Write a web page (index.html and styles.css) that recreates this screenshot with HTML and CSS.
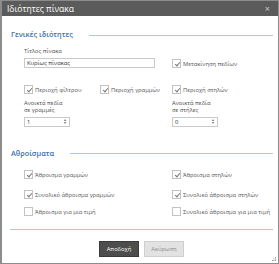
FILE: index.html
```html
<!DOCTYPE html>
<html lang="el">
<head>
  <meta charset="UTF-8">
  <meta name="viewport" content="width=device-width, initial-scale=1.0">
  <title>Ιδιότητες πίνακα</title>
  <link rel="stylesheet" href="styles.css">
</head>
<body>
  <div class="dialog">
    <div class="titlebar">
      <span>Ιδιότητες πίνακα</span>
      <span class="close">×</span>
    </div>
    <div class="content">
      <div class="section-head"><span>Γενικές ιδιότητες</span><i></i></div>
      <div class="general">
        <div class="field title-field">
          <label class="small">Τίτλος πίνακα</label>
          <div class="textbox">Κυρίως πίνακας</div>
        </div>
        <div class="check move-check"><span class="box on"></span>Μετακίνηση πεδίων</div>

        <div class="check row2"><span class="box on"></span>Περιοχή φίλτρου</div>
        <div class="check row2"><span class="box on"></span>Περιοχή γραμμών</div>
        <div class="check row2"><span class="box on"></span>Περιοχή στηλών</div>

        <div class="field row3">
          <label class="small">Ανοικτά πεδία<br>σε γραμμές</label>
          <div class="textbox num">1<span class="spin">▴<br>▾</span></div>
        </div>
        <div class="row3"></div>
        <div class="field row3">
          <label class="small">Ανοικτά πεδία<br>σε στήλες</label>
          <div class="textbox num">0<span class="spin">▴<br>▾</span></div>
        </div>
      </div>

      <div class="section-head sums-head"><span>Αθροίσματα</span><i></i></div>
      <div class="sums">
        <div class="check"><span class="box on"></span>Άθροισμα γραμμών</div>
        <div class="check"><span class="box on"></span>Άθροισμα στηλών</div>
        <div class="check"><span class="box on"></span>Συνολικό άθροισμα γραμμών</div>
        <div class="check"><span class="box on"></span>Συνολικό άθροισμα στηλών</div>
        <div class="check last"><span class="box"></span>Άθροισμα για μια τιμή</div>
        <div class="check last"><span class="box"></span>Συνολικό άθροισμα για μια τιμή</div>
      </div>

      <div class="footer">
        <button class="btn primary">Αποδοχή</button>
        <button class="btn">Ακύρωση</button>
      </div>
    </div>
    <svg class="grip" width="5" height="5" viewBox="0 0 5 5">
      <rect x="3" y="0" width="1" height="1" fill="#999"/>
      <rect x="1.5" y="1.5" width="1" height="1" fill="#999"/>
      <rect x="3" y="1.5" width="1" height="1" fill="#999"/>
      <rect x="0" y="3" width="1" height="1" fill="#999"/>
      <rect x="1.5" y="3" width="1" height="1" fill="#999"/>
      <rect x="3" y="3" width="1" height="1" fill="#999"/>
    </svg>
  </div>
</body>
</html>
```

FILE: styles.css
```css
body { margin: 0; font-family: "Open Sans", "Noto Sans", sans-serif; background: #fff; }
.dialog {
  position: relative;
  width: 279px;
  height: 264px;
  box-sizing: border-box;
  border: 1px solid #8c8c8c;
  border-left-width: 2px;
  background: #fff;
  color: #4a4a4a;
}
.titlebar {
  height: 15px;
  background: #5b5b5b;
  color: #fff;
  font-size: 8.5px;
  display: flex;
  align-items: center;
  justify-content: space-between;
  padding: 0 8px 0 5px;
}
.close { color: #c8c8c8; font-size: 9px; }
.content { padding: 13px 5px 0 9px; }

.section-head {
  display: flex;
  align-items: center;
  height: 10px;
  color: #3a6fb0;
  font-size: 7.3px;
  font-weight: 600;
  white-space: nowrap;
}
.section-head i {
  flex: 1;
  height: 0;
  border-top: 1px solid #a9c8ee;
  margin: 2px 0 0 16px;
}
.sums-head { margin-top: 21px; }

.small { display: block; font-size: 5.8px; line-height: 7.5px; color: #4a4a4a; white-space: nowrap; }
.check {
  display: flex;
  align-items: center;
  font-size: 5.8px;
  height: 8px;
  gap: 2px;
  color: #555;
  white-space: nowrap;
}
.box {
  width: 7px;
  height: 7px;
  border: 1px solid #c2c2c2;
  background: #fff;
  flex: none;
  position: relative;
}
.box.on::after {
  content: "";
  position: absolute;
  left: 2.5px;
  top: 0.5px;
  width: 2px;
  height: 4px;
  border: solid #777;
  border-width: 0 1px 1px 0;
  transform: rotate(40deg);
}

.general {
  display: grid;
  grid-template-columns: 76px 72px 1fr;
  padding-left: 13px;
  margin-top: 9px;
}
.title-field { grid-column: 1 / 3; }
.title-field .small { margin-bottom: 2px; }
.move-check { align-self: end; margin-bottom: 0; }
.row2 { margin-top: 18px; }
.row3 { margin-top: 6px; }
.row3 .small { margin-bottom: 2px; }

.textbox {
  box-sizing: border-box;
  height: 10px;
  width: 131px;
  border: 1px solid #c9c9c9;
  font-size: 5.8px;
  line-height: 8px;
  padding-left: 2px;
  color: #333;
}
.textbox.num { width: 46px; display: flex; justify-content: space-between; }
.spin {
  font-size: 4px;
  line-height: 3.5px;
  color: #666;
  padding: 0 3px 0 0;
  text-align: center;
}

.sums {
  display: grid;
  grid-template-columns: 148px 1fr;
  row-gap: 12px;
  padding-left: 13px;
  margin-top: 13px;
}
.sums .last { margin-top: -3px; }

.footer {
  margin: 13px 0 0 -1px;
  border-top: 1px solid #a9c8ee;
  padding-top: 11px;
  display: flex;
  justify-content: center;
  gap: 5px;
}
.btn {
  width: 40px;
  height: 16px;
  padding: 0;
  font-family: inherit;
  font-size: 5.8px;
  border: 1px solid #cfcfcf;
  background: #e2e2e2;
  color: #8a8a8a;
}
.btn.primary { background: #4d4d4d; border-color: #3a3a3a; color: #fff; }
.grip { position: absolute; right: 1px; bottom: 1px; }
```
